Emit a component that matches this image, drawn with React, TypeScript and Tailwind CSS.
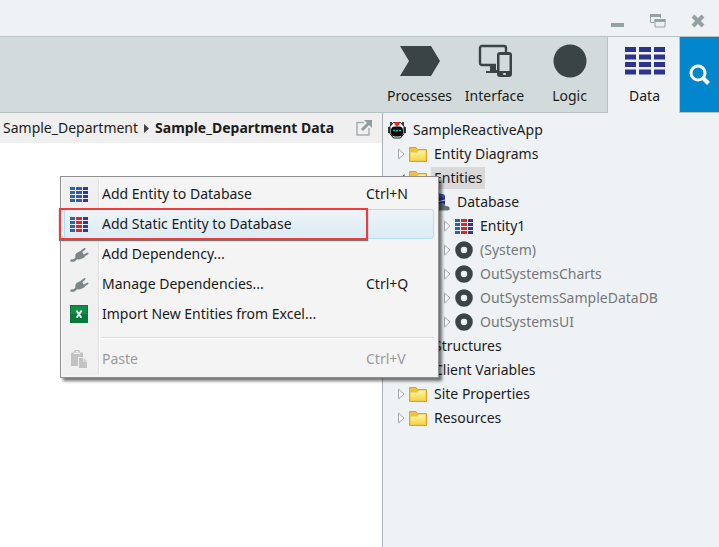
import type { ReactNode } from "react";

const grid = [0, 1, 2, 3];

function TableIcon({ mid = "#3458b8", left = "#2a62b4", right = "#3436a0" }: { mid?: string; left?: string; right?: string }) {
  return (
    <svg className="block h-[15px] w-[18px]" viewBox="0 0 18 15" aria-hidden="true">
      {grid.map((r) => (
        <g key={r}>
          <rect x="0" y={r * 4} width="5" height="3" fill={left} />
          <rect x="6" y={r * 4} width="6" height="3" fill={mid} />
          <rect x="13" y={r * 4} width="5" height="3" fill={right} />
        </g>
      ))}
    </svg>
  );
}

function PlugIcon() {
  return (
    <svg className="block h-[18px] w-[20px]" viewBox="0 0 20 18" fill="#7b8688" aria-hidden="true">
      <path d="M6.5 9.5Q7 8 9 7.300L12.500 5.500 16 12 13 13.500Q9 15.500 7 13.600Q6 12 6.500 9.500Z" />
      <path d="M12.500 6.500 15.500 4M15 10.700 18.500 8.500" stroke="#7b8688" strokeWidth="2" strokeLinecap="round" />
      <path d="M8 12.500Q5 16.800 1.500 15.300" fill="none" stroke="#7b8688" strokeWidth="2.200" />
    </svg>
  );
}

function ExcelIcon() {
  return (
    <svg className="block size-[18px]" viewBox="0 0 18 18" aria-hidden="true">
      <path fill="#07783a" d="M0 0h18v18H0z" />
      <path fill="#138b49" d="M1 1h16v8H1z" />
      <path d="m6.4 5.5 5 7.2M11.6 5.5l-5 7.2" stroke="#e8f2ec" strokeWidth="2" />
    </svg>
  );
}

function PasteIcon() {
  return (
    <svg className="block h-[18px] w-[17px]" viewBox="0 0 17 18" fill="#c3c3c3" aria-hidden="true">
      <path d="M0 2.500h12V7H7v9H0z" />
      <path d="M3 3.500h6" stroke="#f0f0f0" />
      <path d="M3.500 2.500a2.500 2.200 0 0 1 5 0" fill="none" stroke="#c3c3c3" strokeWidth="1.500" />
      <path d="M8 8h4.500L16 11.300V18H8z" />
      <path d="M12.500 8v3.300H16" fill="none" stroke="#e4e4e4" />
    </svg>
  );
}

function FolderIcon() {
  return (
    <svg className="block h-[16px] w-[18px]" viewBox="0 0 18 16" aria-hidden="true">
      <defs>
        <linearGradient id="folder" x1="0" y1="0" x2="0" y2="1">
          <stop offset="0" stopColor="#fff7a8" />
          <stop offset="1" stopColor="#f7d447" />
        </linearGradient>
      </defs>
      <path d="M.5 15.5V1.5H7l1.500 2h9v12z" fill="#edc144" stroke="#dda51f" />
      <path d="M1.500 14.500v-8H8l2-2h6.500v10z" fill="url(#folder)" />
    </svg>
  );
}

function RingIcon() {
  return (
    <svg className="block size-[18px]" viewBox="0 0 18 18" aria-hidden="true">
      <circle cx="9" cy="9" r="6" fill="none" stroke="#3a4445" strokeWidth="5.600" />
    </svg>
  );
}

function RobotIcon() {
  return (
    <svg className="block size-[18px]" viewBox="0 0 18 18" aria-hidden="true">
      <path d="M3 1v4M15 1v4M1 6v6M17 6v6" stroke="#111" strokeWidth="1.600" />
      <path d="M5.500 1.500h7l3.500 4v7L12.500 17h-7L2 12.500v-7z" fill="#fff" stroke="#111" />
      <path d="M6.500 1h5v2.500L9 5.500 6.500 3.500z" fill="#e32b2b" />
      <rect x="3" y="5.500" width="12" height="10" rx="4" fill="#050505" />
      <path d="M5 9.500h2M8 9.500h2M11 9.500h2" stroke="#20cbd5" strokeWidth="1.500" />
    </svg>
  );
}

function DatabaseIcon() {
  return (
    <svg className="block size-[18px]" viewBox="0 0 18 18" aria-hidden="true">
      <path d="M1 3v11q5 3 12 0V3z" fill="#2d3092" />
      <ellipse cx="7" cy="3" rx="6" ry="2.500" fill="#474bb4" />
      <path d="M1 7q6 3 12 0" stroke="#d6d8ed" fill="none" />
      <path d="M6 17.500a3 3 0 0 1 0-5q1-3 4-2.500 3 0 3.500 3 4-.5 4.300 2.500 0 2-2.300 2z" fill="#667477" />
    </svg>
  );
}

function Expander({ open }: { open?: boolean }) {
  return (
    <svg className="block h-[12px] w-[7px]" viewBox="0 0 7 12" aria-hidden="true">
      {open ? <path d="M6.500 2v7H0z" fill="#444" /> : <path d="M.5 1v10l5.500-5z" fill="#f5f7f8" stroke="#a9a9a9" />}
    </svg>
  );
}

type Item = { label: string; icon: ReactNode; level: 0 | 1 | 2 | 3; muted?: boolean; open?: boolean };

const tree: Item[] = [
  { label: "SampleReactiveApp", icon: <RobotIcon />, level: 0 },
  { label: "Entity Diagrams", icon: <FolderIcon />, level: 1 },
  { label: "Entities", icon: <FolderIcon />, level: 1, open: true },
  { label: "Database", icon: <DatabaseIcon />, level: 2, open: true },
  { label: "Entity1", icon: <TableIcon mid="#e3261b" />, level: 3 },
  { label: "(System)", icon: <RingIcon />, level: 3, muted: true },
  { label: "OutSystemsCharts", icon: <RingIcon />, level: 3, muted: true },
  { label: "OutSystemsSampleDataDB", icon: <RingIcon />, level: 3, muted: true },
  { label: "OutSystemsUI", icon: <RingIcon />, level: 3, muted: true },
  { label: "Structures", icon: <FolderIcon />, level: 1 },
  { label: "Client Variables", icon: <FolderIcon />, level: 1 },
  { label: "Site Properties", icon: <FolderIcon />, level: 1 },
  { label: "Resources", icon: <FolderIcon />, level: 1 },
];

const indent = ["pl-[5px]", "pl-[15px]", "pl-[38px]", "pl-[61px]"];

function TreeRow({ item }: { item: Item }) {
  const selected = item.label === "Entities";
  return (
    <li role="treeitem" aria-selected={selected} aria-level={item.level + 1}>
      <button className={`flex h-6 w-full items-center gap-1 whitespace-nowrap text-left ${indent[item.level]} ${item.muted ? "text-[#777]" : "text-[#1c1c1c]"}`}>
        {item.level > 0 && <Expander open={item.open} />}
        <span className="w-[18px] shrink-0">{item.icon}</span>
        <span className={`px-[3px] leading-[22px] ${selected ? "bg-[#d9d9d9]" : ""}`}>{item.label}</span>
      </button>
    </li>
  );
}

const menu: { label: string; keys?: string; icon: ReactNode }[] = [
  { label: "Add Entity to Database", keys: "Ctrl+N", icon: <TableIcon /> },
  { label: "Add Static Entity to Database", icon: <TableIcon mid="#e3261b" /> },
  { label: "Add Dependency...", icon: <PlugIcon /> },
  { label: "Manage Dependencies...", keys: "Ctrl+Q", icon: <PlugIcon /> },
  { label: "Import New Entities from Excel...", icon: <ExcelIcon /> },
  { label: "Paste", keys: "Ctrl+V", icon: <PasteIcon /> },
];

function ContextMenu() {
  return (
    <div role="menu" className="absolute left-[60px] top-[176px] w-[379px] border border-[#8f9191] bg-[#f4f4f4] p-[2px] shadow-[3px_3px_3px_rgba(0,0,0,0.55)]">
      <div className="bg-[linear-gradient(to_right,#f0f0f0_35px,#dedede_35px,#dedede_36px,#ffffff_36px,#ffffff_37px,#f4f4f4_37px)] pb-px pl-px pr-[2px]">
        {menu.map((m, i) => {
          const last = i === menu.length - 1;
          return (
            <div key={m.label}>
              {last && <hr className="mb-[5px] ml-[38px] mt-[8px] border-t border-b border-t-[#dcdcdc] border-b-white" />}
              <button
                role="menuitem"
                disabled={last}
                className={`flex h-[30px] w-full items-center rounded-[3px] border text-left ${i === 1 ? "border-[#aedff2] bg-[linear-gradient(#edf4f8,#dcebf4)]" : "border-transparent"} ${last ? "text-[#9a9a9a]" : "text-[#1a1a1a]"}`}
              >
                <span className="flex w-[28px] justify-center">{m.icon}</span>
                <span className="ml-[9px] flex-1">{m.label}</span>
                <span className="w-[67px]">{m.keys}</span>
              </button>
            </div>
          );
        })}
      </div>
      <div className="pointer-events-none absolute -left-[2px] top-[31px] h-[32px] w-[309px] border-2 border-[#ef3b39] shadow-[0_1px_1px_#777]" />
    </div>
  );
}

const tabs: { label: string; icon: ReactNode }[] = [
  {
    label: "Processes",
    icon: (
      <svg className="h-[34px] w-[40px]" viewBox="0 0 40 34">
        <path d="M0 2h31l9 15-9 15H0l9-15z" fill="#3a4345" />
      </svg>
    ),
  },
  {
    label: "Interface",
    icon: (
      <svg className="h-[34px] w-[34px]" viewBox="0 0 34 34">
        <path d="M18 21H4a2 2 0 0 1-2-2V4a2 2 0 0 1 2-2h22a2 2 0 0 1 2 2v5" fill="none" stroke="#3a4345" strokeWidth="2.400" />
        <path d="M12 21h6v5h1v3H8v-2h4z" fill="#3a4345" />
        <rect x="19" y="8" width="15" height="25" rx="3" fill="#3a4345" />
        <path d="M21.500 11h10v16h-10z" fill="#d2dadb" />
        <rect x="25" y="29" width="3" height="2" rx="1" fill="#d2dadb" />
      </svg>
    ),
  },
  {
    label: "Logic",
    icon: (
      <svg className="size-[34px]" viewBox="0 0 34 34">
        <circle cx="17" cy="17" r="16.500" fill="#3a4345" />
      </svg>
    ),
  },
  {
    label: "Data",
    icon: (
      <svg className="h-[34px] w-[40px]" viewBox="0 0 40 34">
        {grid.map((r) => (
          <path key={r} d={`M0 ${3 + r * 7.5}h11v5H0zM14 ${3 + r * 7.5}h12v5H14zM29 ${3 + r * 7.5}h11v5H29z`} fill="#2c3290" />
        ))}
      </svg>
    ),
  },
];

export default function App() {
  return (
    <div className="relative flex min-h-screen flex-col bg-[#eef2f5] font-['Noto_Sans','Open_Sans',sans-serif] text-[14px] leading-5 text-[#1c1c1c]">
      <header className="flex h-9 items-center justify-end gap-[25px] pr-[14px] pt-[6px] text-[#94a2a5]">
        <button aria-label="Minimize">
          <svg className="block h-[14px] w-[14px]" viewBox="0 0 14 14">
            <path d="M0 9h13v4H0z" fill="currentColor" />
          </svg>
        </button>
        <button aria-label="Restore">
          <svg className="block h-[14px] w-[16px]" viewBox="0 0 16 14" fill="none" stroke="currentColor">
            <path d="M4 8.500H.5v-8h10V4M5 5.500h10v7.500H5z" />
            <path d="M0 1.500h11M4.500 6.500h11" strokeWidth="3" />
          </svg>
        </button>
        <button aria-label="Close">
          <svg className="block h-[14px] w-[14px]" viewBox="0 0 14 14">
            <path d="m2 2 10 10M12 2 2 12" stroke="currentColor" strokeWidth="4" />
          </svg>
        </button>
      </header>

      <nav className="flex h-[77px] justify-end border-y border-[#b8c2c5] bg-[#d2dadb]">
        {tabs.map((t) => (
          <button
            key={t.label}
            className={`flex flex-col items-center pt-[7px] ${t.label === "Data" ? "-mb-px w-[73px] border-x border-[#b8c2c5] bg-[#eef2f5] pl-[2px]" : "w-[75px]"}`}
          >
            {t.icon}
            <span className="mt-[8px]">{t.label}</span>
          </button>
        ))}
        <button aria-label="Search" className="flex w-[39px] items-center justify-center bg-[#0287cd]">
          <svg className="size-[21px]" viewBox="0 0 21 21" fill="none" stroke="#fff" strokeWidth="3">
            <circle cx="9" cy="9" r="7" />
            <path d="m14 14 5.500 5.500" strokeWidth="4" />
          </svg>
        </button>
      </nav>

      <div className="flex flex-1">
        <main className="flex-1 bg-white">
          <div className="flex h-[30px] items-center bg-[#efefef] pl-[3px] pr-[10px]">
            <a href="#department">Sample_Department</a>
            <svg className="mx-[6px] h-[9px] w-[5px]" viewBox="0 0 5 9">
              <path d="M0 0 5 4.500 0 9z" fill="#444" />
            </svg>
            <strong className="flex-1 whitespace-nowrap font-bold">Sample_Department Data</strong>
            <button aria-label="Open in new window">
              <svg className="block size-[16px]" viewBox="0 0 16 16" fill="none" stroke="#a7b0b2">
                <path d="M8 2.500H1v12.500h12V8" strokeWidth="1.500" />
                <path d="m6 10 7-7" stroke="#929d9f" strokeWidth="3" />
                <path d="M8 0h8v8z" fill="#929d9f" stroke="none" />
              </svg>
            </button>
          </div>
        </main>
        <aside className="w-[337px] border-l border-[#a9b2b5] pt-[5px]">
          <ul role="tree" aria-label="Data">
            {tree.map((item) => (
              <TreeRow key={item.label} item={item} />
            ))}
          </ul>
        </aside>
      </div>
      <ContextMenu />
    </div>
  );
}
